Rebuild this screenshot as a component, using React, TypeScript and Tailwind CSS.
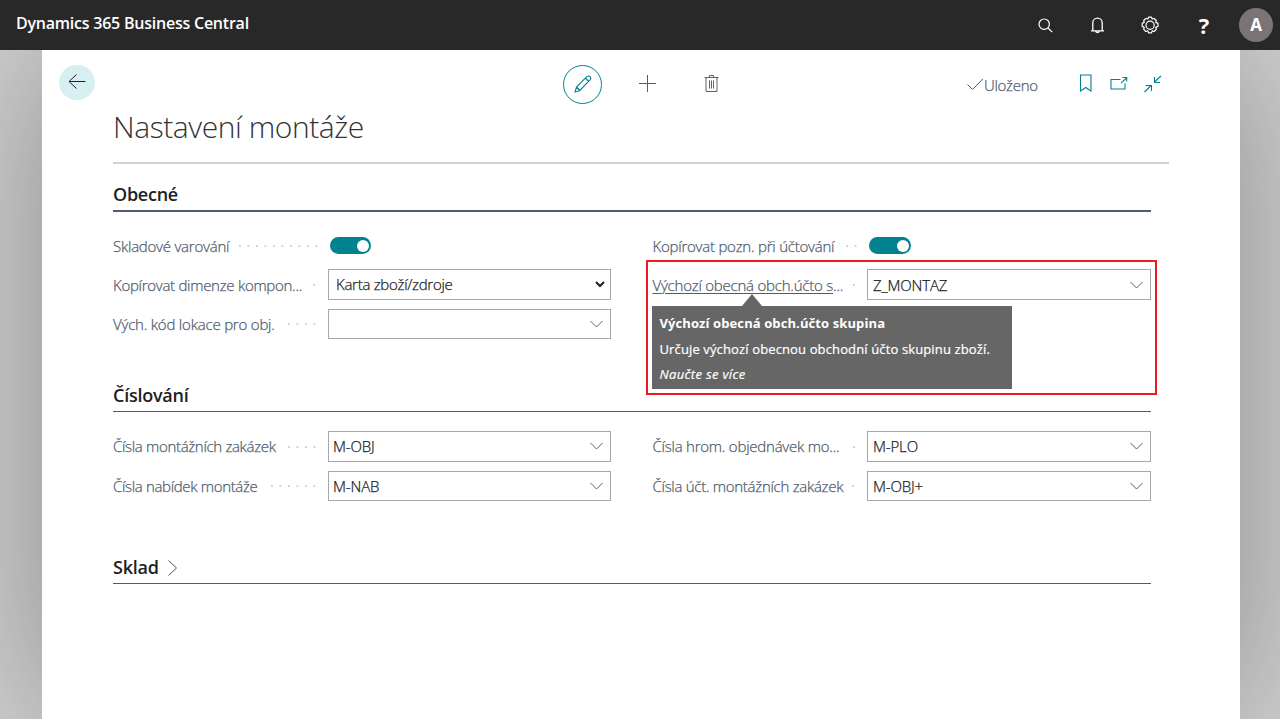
import React from "react";

type FieldProps = {
  label: React.ReactNode;
  labelClass: string;
  dotsClass: string;
  children: React.ReactNode;
};

function Field({ label, labelClass, dotsClass, children }: FieldProps) {
  return (
    <div className="flex h-[31px] items-center">
      <span className={"whitespace-nowrap text-[15px] font-light leading-5 text-[#505c6d] [-webkit-text-stroke:0.25px_#505c6d] " + labelClass}>{label}</span>
      <span className="flex grow justify-end pr-[12px]">
        <svg className={"h-[2px] " + dotsClass} aria-hidden="true">
          <defs>
            <pattern id="leader" width="8.5" height="2" patternUnits="userSpaceOnUse">
              <rect x="0" y="0" width="2" height="2" fill="#d2d5d8" />
            </pattern>
          </defs>
          <rect width="100%" height="2" fill="url(#leader)" />
        </svg>
      </span>
      {children}
    </div>
  );
}

function Lookup({ value, className }: { value: string; className: string }) {
  return (
    <div className={"flex shrink-0 items-center justify-between border border-[#a6a8aa] bg-white pr-[7px] " + className}>
      <span className="whitespace-nowrap text-[15px] font-light leading-5 tracking-[-0.15px] text-[#212121] [-webkit-text-stroke:0.25px_#212121]">{value}</span>
      <svg width="13" height="8" viewBox="0 0 13 8" fill="none" stroke="#605e5c">
        <path d="M.5 1l6 6 6-6" />
      </svg>
    </div>
  );
}

function Toggle({ className, pillClass }: { className: string; pillClass: string }) {
  return (
    <div className={"flex shrink-0 " + className}>
      <div className={"flex h-[17px] items-center justify-end rounded-full bg-[#00838f] pr-[2px] " + pillClass}>
        <span className="h-3 w-3 rounded-full bg-white" />
      </div>
    </div>
  );
}

export default function App() {
  return (
    <div className="flex h-[719px] w-[1280px] flex-col overflow-hidden bg-[#d0d0d0] font-['Open_Sans','Noto_Sans',sans-serif]">
      <header className="relative z-10 flex h-[50px] shrink-0 items-center bg-[#282828] pl-4 pr-[7px] text-white">
        <h1 className="grow pb-1 text-base font-semibold tracking-[-0.23px]">Dynamics 365 Business Central</h1>
        <svg width="16" height="16" viewBox="0 0 16 16" fill="none" stroke="#fff" strokeWidth="1.2">
          <circle cx="7.2" cy="7.2" r="5.2" /><path d="M11 11l4.200 4.200" />
        </svg>
        <svg className="ml-9" width="16" height="18" viewBox="0 0 16 18" fill="none" stroke="#fff" strokeWidth="1.3">
          <path d="M3.8 14.500V6.800a4.700 4.700 0 019.400 0v7.700M2 14.800h13M6.500 15c.3 2 3.700 2 4 0" />
        </svg>
        <svg className="ml-9" width="18" height="18" viewBox="0 0 18 18" fill="none" stroke="#fff" strokeWidth="1.2" strokeLinejoin="round">
          <path d="M7.500 1.200h3l.7 1.800 1.900-.5 2.200 2-.5 1.900 2.200 1v3l-2.200 1 .5 2-2.200 2.100-1.900-.6-.7 2h-3l-.7-2-1.900.6-2.200-2.100.5-2-2-1v-3l2-1-.5-1.900 2.200-2 1.900.5z" /><circle cx="9.100" cy="9.200" r="4.100" />
        </svg>
        <span className="ml-9 w-[18px] text-center text-[22px] font-bold leading-6">?</span>
        <span className="ml-[26px] flex h-[34px] w-[34px] items-center justify-center rounded-full bg-[#7a7574] pb-px text-[17px] font-bold">A</span>
      </header>

      <div className="flex grow pl-[42px]">
        <main className="w-[1198px] bg-white shadow-[0_0_150px_rgba(0,0,0,0.33)]">
          <div className="flex h-[67px] items-center pl-[17px]">
            <button className="-mt-[2px] flex h-[35px] w-9 items-center justify-center rounded-full bg-[#d8eff1]">
              <svg className="-mt-px" width="18" height="16" viewBox="0 0 18 16" fill="none" stroke="#212121"><path d="M17.500 7.500H1M8.500.5l-7.500 7 7.500 7" /></svg>
            </button>
            <div className="ml-[468px] mt-[2px] flex h-[39px] w-[39px] items-center justify-center rounded-full border border-[#00838f] pb-[2px]">
              <svg width="18" height="18" viewBox="0 0 18 18" fill="none" stroke="#00838f" strokeWidth="1.1"><path d="M1 17l1.500-5L12.800 1.700c2.200-2 5.200 1 3.200 3.200L5.800 15.500zM2.500 12l3.300 3.500M11.400 3l3.600 3.600" /></svg>
            </div>
            <svg className="ml-9" width="19" height="18" viewBox="0 0 19 18" fill="none" stroke="#505c6d"><path d="M1 8.500h17M9.500 0v17" /></svg>
            <svg className="-mt-px ml-[47px]" width="16" height="18" viewBox="0 0 16 18" fill="none" stroke="#605e6b"><path d="M.5 3.500h14M5.500 3.500v-2h4v2M2 3.500v14h11v-14M5.500 6.500v8M7.500 6.500v8M9.500 6.500v8" /></svg>
            <svg className="ml-[247px] mt-[2px]" width="17" height="13" viewBox="0 0 17 13" fill="none" stroke="#505c6d"><path d="M.5 6.500l5 5L16 .8" /></svg>
            <span className="mt-[2px] w-[55px] whitespace-nowrap text-[15px] font-light leading-5 tracking-[-0.3px] text-[#505c6d] [-webkit-text-stroke:0.25px_#505c6d]">Uloženo</span>
            <svg className="-mt-px ml-10" width="14" height="18" viewBox="0 0 14 18" fill="none" stroke="#00838f" strokeWidth="1.1"><path d="M1.500 1h10.500v16l-5.250-3.500-5.250 3.500z" /></svg>
            <svg className="ml-[17px]" width="18" height="16" viewBox="0 0 18 16" fill="none" stroke="#00838f" strokeWidth="1.1"><path d="M10.500 3.500H1v9.500h14V7.500M11 7.200l5.500-5.200M12.500 1.500h4.200v4" /></svg>
            <svg className="ml-4" width="18" height="18" viewBox="0 0 18 18" fill="none" stroke="#00838f" strokeWidth="1.1"><path d="M17 1l-6.500 6M10.500 2v5.500H16M.5 17L7 10.500M1.500 10.500H7.500V16" /></svg>
          </div>

          <div className="ml-[71px] w-[1056px]">
            <h2 className="h-[47px] border-b-2 border-[#d0d3d7] text-[30px] font-light leading-[20px] tracking-[-0.43px] text-[#333]">Nastavení montáže</h2>
            <div className="w-[1038px]">
              <section className="h-[210px]">
                <h3 className="flex h-12 items-end border-b-2 border-[#505c6d] pb-[4px] text-lg font-semibold leading-6 tracking-[-0.25px] text-[#212121]">Obecné</h3>
                <div className="flex justify-between">
                  <div className="mt-[18px] flex w-[498px] flex-col gap-[8px]">
                    <Field label="Skladové varování" labelClass="tracking-[-0.23px]" dotsClass="w-[79px]"><Toggle className="w-[281px]" pillClass="w-[41px]" /></Field>
                    <Field label="Kopírovat dimenze kompon..." labelClass="tracking-[-0.28px]" dotsClass="w-[3px]">
                      <div className="flex h-[31px] w-[283px] shrink-0 items-center justify-between border border-[#a6a8aa] pl-[7px] pr-[5px]">
                        <span className="pb-px text-[15px] font-light tracking-[-0.28px] text-[#212121] [-webkit-text-stroke:0.25px_#212121]">Karta zboží/zdroje</span>
                        <svg width="10" height="7" viewBox="0 0 10 7" fill="none" stroke="#212121" strokeWidth="2"><path d="M1 1l4 4 4-4" /></svg>
                      </div>
                    </Field>
                    <Field label="Vých. kód lokace pro obj." labelClass="tracking-[-0.2px]" dotsClass="w-[28px]"><Lookup value="" className="h-[30px] w-[283px] pl-[4px]" /></Field>
                  </div>
                  <div className="relative mt-[18px] flex w-[499px] flex-col gap-[8px]">
                    <Field label="Kopírovat pozn. při účtování" labelClass="ml-[0.5px] tracking-[-0.23px]" dotsClass="w-[11px]"><Toggle className="w-[282px]" pillClass="w-[42px]" /></Field>
                    <Field label={<><u className="underline-offset-2">Výchozí obecná obch.účto s</u>...</>} labelClass="ml-[0.5px] tracking-[-0.22px]" dotsClass="w-[2px]"><Lookup value="Z_MONTAZ" className="h-[31px] w-[284px] pl-[5px]" /></Field>
                    <div className="absolute -left-[6px] top-[30px] h-[135px] w-[511px] border-2 border-[#ed1c24]" />
                    <div className="absolute left-0 top-[76px] h-[83px] w-[360px] bg-[#666] pl-[7.5px] pt-[7px] text-[13px] text-white">
                      <svg className="absolute -top-3 left-[90px]" width="20" height="12" viewBox="0 0 20 12"><path d="M10 0l10 12H0z" fill="#666" /></svg>
                      <p className="h-[26px] whitespace-nowrap font-bold leading-5 tracking-[0.1px]">Výchozí obecná obch.účto skupina</p>
                      <p className="h-[25px] whitespace-nowrap font-normal leading-5 tracking-[0.13px] [-webkit-text-stroke:0.2px_#fff]">Určuje výchozí obecnou obchodní účto skupinu zboží.</p>
                      <p className="font-normal italic leading-5 tracking-[0.35px] [-webkit-text-stroke:0.2px_#fff]">Naučte se více</p>
                    </div>
                  </div>
                </div>
              </section>
              <section className="h-[172px]">
                <h3 className="flex h-[38px] items-end border-b border-[#505c6d] pb-[4px] text-lg font-semibold leading-6 tracking-[-0.25px] text-[#212121]">Číslování</h3>
                <div className="mt-[19px] flex justify-between">
                  <div className="flex w-[498px] flex-col gap-[8px]">
                    <Field label="Čísla montážních zakázek" labelClass="pb-px tracking-[-0.32px]" dotsClass="w-[28px]"><Lookup value="M-OBJ" className="h-[31px] w-[283px] pb-px pl-[4px]" /></Field>
                    <Field label="Čísla nabídek montáže" labelClass="tracking-[-0.33px]" dotsClass="w-[45px]"><Lookup value="M-NAB" className="h-[30px] w-[283px] pl-[4px]" /></Field>
                  </div>
                  <div className="flex w-[499px] flex-col gap-[8px]">
                    <Field label="Čísla hrom. objednávek mo..." labelClass="ml-[0.5px] pb-px tracking-[-0.23px]" dotsClass="w-[2px]"><Lookup value="M-PLO" className="h-[31px] w-[284px] pb-px pl-[5px]" /></Field>
                    <Field label="Čísla účt. montážních zakázek" labelClass="ml-[0.5px] tracking-[-0.28px]" dotsClass="w-[3px]"><Lookup value="M-OBJ+" className="h-[30px] w-[284px] pl-[5px]" /></Field>
                  </div>
                </div>
              </section>
              <h3 className="flex h-[38px] items-end border-b border-[#505c6d] pb-[4px] text-lg font-semibold leading-6 tracking-[-0.25px] text-[#212121]">
                Sklad
                <svg className="mb-[3px] ml-[9px]" width="9" height="16" viewBox="0 0 9 16" fill="none" stroke="#505050"><path d="M.5.5l8 7.500-8 7.500" /></svg>
              </h3>
            </div>
          </div>
        </main>
      </div>
    </div>
  );
}
